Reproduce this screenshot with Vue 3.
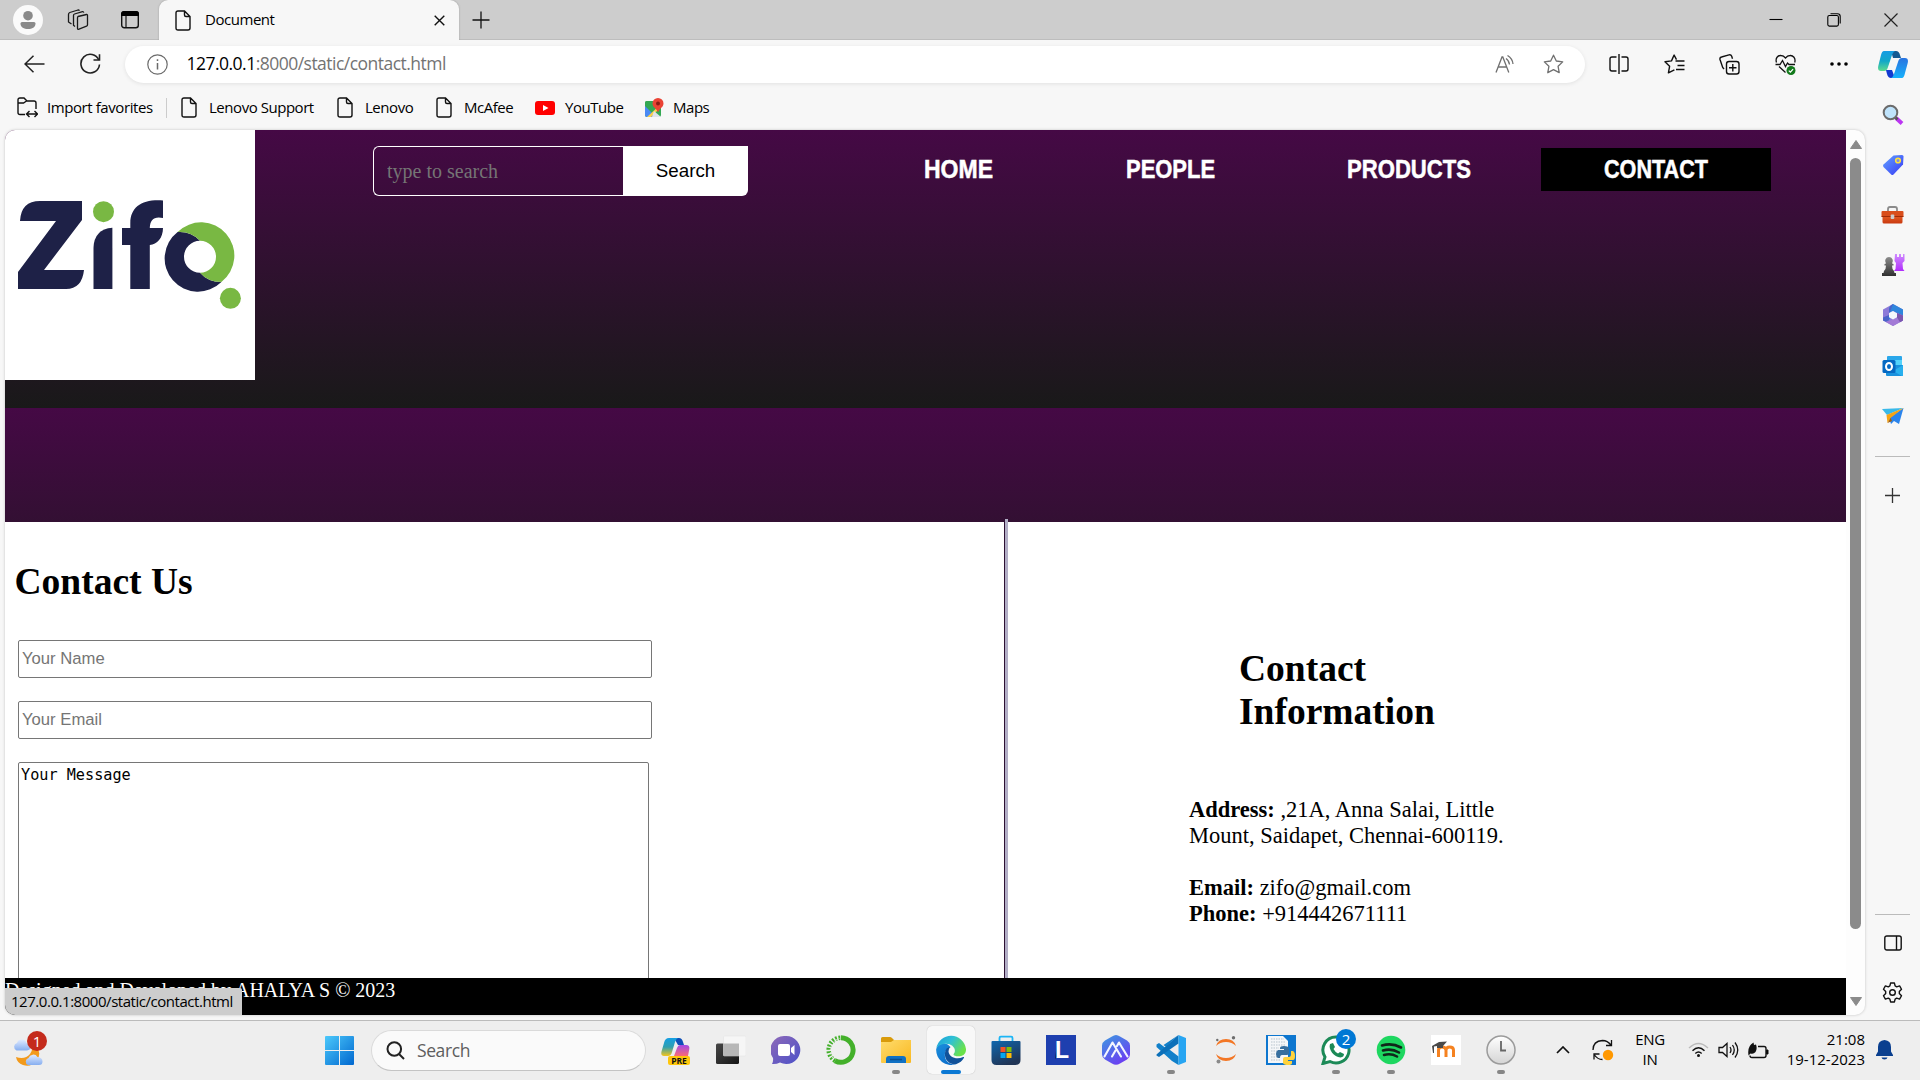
<script setup>
const navItems = [
  { label: 'HOME', width: 69, natural: 75 },
  { label: 'PEOPLE', width: 89, natural: 101.4 },
  { label: 'PRODUCTS', width: 124, natural: 140.3 },
  { label: 'CONTACT', width: 104, natural: 120.4, active: true }
]
const fileMarks = [
  { label: 'Lenovo Support', width: 156 },
  { label: 'Lenovo', width: 99 },
  { label: 'McAfee', width: 99 }
]
</script>

<template>
  <div class="desktop">
    <svg class="defs" width="0" height="0">
      <defs>
        <linearGradient id="gBlue" x1="0" y1="0" x2="1" y2="1"><stop offset="0" stop-color="#4cc9fb" /><stop offset="1" stop-color="#0067cf" /></linearGradient>
        <linearGradient id="gCopA" x1="0" y1="0" x2="0" y2="1"><stop offset="0" stop-color="#159ce4" /><stop offset=".5" stop-color="#12a7c9" /><stop offset="1" stop-color="#5fdc8e" /></linearGradient>
        <linearGradient id="gCopB" x1="0" y1="0" x2="0" y2="1"><stop offset="0" stop-color="#2a74e0" /><stop offset="1" stop-color="#17b1fb" /></linearGradient>
        <linearGradient id="gPreA" x1="0" y1="0" x2="0" y2="1"><stop offset="0" stop-color="#149fe3" /><stop offset=".5" stop-color="#2f9fb0" /><stop offset="1" stop-color="#f4c51b" /></linearGradient>
        <linearGradient id="gPreB" x1="0" y1="0" x2="0" y2="1"><stop offset="0" stop-color="#a14ae6" /><stop offset="1" stop-color="#fb6a74" /></linearGradient>
        <linearGradient id="gTag" x1="0" y1="0" x2="1" y2="1"><stop offset="0" stop-color="#62a4ff" /><stop offset="1" stop-color="#3737f5" /></linearGradient>
        <linearGradient id="gBox" x1="0" y1="0" x2="0" y2="1"><stop offset="0" stop-color="#ee6a2c" /><stop offset="1" stop-color="#c93a10" /></linearGradient>
        <linearGradient id="gRook" x1="0" y1="0" x2="0" y2="1"><stop offset="0" stop-color="#cf8cff" /><stop offset="1" stop-color="#b02dfb" /></linearGradient>
        <linearGradient id="gPawn" x1="0" y1="0" x2="0" y2="1"><stop offset="0" stop-color="#8c8c8c" /><stop offset="1" stop-color="#303030" /></linearGradient>
        <linearGradient id="gChat" x1="0" y1="0" x2="1" y2="1"><stop offset="0" stop-color="#8f6ab8" /><stop offset="1" stop-color="#4b50c8" /></linearGradient>
        <linearGradient id="gFold" x1="0" y1="0" x2="1" y2="1"><stop offset="0" stop-color="#ffdc6d" /><stop offset="1" stop-color="#f9b820" /></linearGradient>
        <linearGradient id="gEdgeA" x1="0" y1="0" x2="1" y2=".5"><stop offset="0" stop-color="#1b9fd9" /><stop offset=".5" stop-color="#2fc0d5" /><stop offset="1" stop-color="#6be24a" /></linearGradient>
        <linearGradient id="gEdgeB" x1="0" y1="0" x2=".6" y2="1"><stop offset="0" stop-color="#1b8fdd" /><stop offset="1" stop-color="#0d6fcb" /></linearGradient>
        <linearGradient id="gStore" x1="0" y1="0" x2=".5" y2="1"><stop offset="0" stop-color="#0f67ae" /><stop offset="1" stop-color="#203556" /></linearGradient>
        <linearGradient id="gHex" x1="0" y1="0" x2=".6" y2="1"><stop offset="0" stop-color="#3c9ae0" /><stop offset="1" stop-color="#6b3ff2" /></linearGradient>
        <linearGradient id="gDark" x1="0" y1="0" x2="1" y2="1"><stop offset="0" stop-color="#474747" /><stop offset="1" stop-color="#151515" /></linearGradient>
        <linearGradient id="gCloud" x1="0" y1="0" x2="0" y2="1"><stop offset="0" stop-color="#dfeaff" /><stop offset="1" stop-color="#86aef0" /></linearGradient>
        <linearGradient id="gClock" x1="0" y1="0" x2="0" y2="1"><stop offset="0" stop-color="#ffffff" /><stop offset="1" stop-color="#d4d4d4" /></linearGradient>
      </defs>
    </svg>

    <header class="tabbar">
      <svg class="profile" width="30" height="30" viewBox="0 0 30 30"><circle cx="15" cy="15" r="15" fill="#fafafa" /><circle cx="15" cy="10.700" r="4.800" fill="#8a8a8a" /><path d="M7.500 18.500q0-1.500 1.500-1.500h12q1.500 0 1.500 1.500c0 4-3.500 5.500-7.500 5.500s-7.500-1.500-7.500-5.500z" fill="#8a8a8a" /></svg>
      <svg class="workspaces" width="22" height="22" viewBox="0 0 22 22" fill="none" stroke="#1a1a1a" stroke-width="1.300" stroke-linejoin="round"><path d="M11 7.500l8.500-2q1-.2 1 .9v9.300q0 1-1 1.500l-7.500 3q-1.500.4-1.500-1V9q0-1.200.5-1.500z" /><path d="M8 17.500l-1.500-1.200V6.500q0-1.200 1-1.500l8-2.300q1-.2 1.300 1" /><path d="M4.500 15L1.500 13V5.500Q1.500 4 2.800 3.500L11 1q1-.2 1.400.8" /></svg>
      <svg class="tabaction" width="20" height="20" viewBox="0 0 20 20"><rect x="1.700" y="1.700" width="16.600" height="16" rx="2.500" fill="none" stroke="#111" stroke-width="1.400" /><path d="M1 6V4q0-3 3-3h12q3 0 3 3v2z" fill="#000" /><path d="M6 6v12" stroke="#111" stroke-width="1.200" /></svg>
      <div class="tab">
        <svg class="file" width="16" height="21" viewBox="0 0 16 21"><path d="M3 1h6.500L15 6.500V18q0 2-2 2H3q-2 0-2-2V3q0-2 2-2zM9.500 1v4q0 1.500 1.500 1.500h4" fill="none" stroke="#111" stroke-width="1.400" /></svg>
        <span class="ui tabtitle">Document</span>
        <svg width="11" height="11" viewBox="0 0 11 11"><path d="M.7.7l9.600 9.600M10.300.7L.7 10.300" stroke="#111" stroke-width="1.400" /></svg>
      </div>
      <svg class="newtab" width="18" height="18" viewBox="0 0 18 18"><path d="M9 .5v17M.5 9h17" stroke="#111" stroke-width="1.300" /></svg>
      <div class="winctl">
        <svg width="14" height="14" viewBox="0 0 14 14"><path d="M.5 6.500h13" stroke="#000" stroke-width="1.100" /></svg>
        <svg width="14" height="14" viewBox="0 0 14 14" fill="none" stroke="#000" stroke-width="1.100"><rect x=".8" y="2.500" width="10.600" height="10.600" rx="1.500" /><path d="M3.500.8h7q2.700 0 2.700 2.700v7" /></svg>
        <svg width="14" height="14" viewBox="0 0 14 14"><path d="M.5.5l13 13M13.500.5l-13 13" stroke="#222" stroke-width="1.200" /></svg>
      </div>
    </header>

    <div class="toolbar">
      <svg class="back" width="21" height="18" viewBox="0 0 21 18" fill="none" stroke="#222" stroke-width="1.500"><path d="M20.500 9H1M9.500.7L1 9l8.500 8.300" /></svg>
      <svg class="reload" width="22" height="22" viewBox="0 0 22 22" fill="none" stroke="#222" stroke-width="1.600"><path d="M19.800 7A9.300 9.300 0 1 0 20.500 11.500" /><path d="M20.500 1.200V7H14.500" /></svg>
      <div class="omnibox">
        <svg width="21" height="21" viewBox="0 0 21 21" fill="none" stroke="#6a6a6a" stroke-width="1.200"><circle cx="10.500" cy="10.500" r="9.700" /><path d="M10.500 9v6.500M10.500 5.300v1.600" stroke-width="1.500" /></svg>
        <span class="ui url"><b>127.0.0.1</b>:8000/static/contact.html</span>
        <svg class="aloud" width="20" height="19" viewBox="0 0 20 19" fill="none" stroke="#707070" stroke-width="1.300"><path d="M1 17.500L7 2h.800l6 15.500M3.200 12h8.500M11 3.500q3 2 3.500 6M12.500.5q5 3 5.500 8.500" /></svg>
        <svg class="star" width="21" height="20" viewBox="0 0 21 20"><path d="M10.500 1.200l2.800 5.800 6.400.9-4.600 4.400 1.100 6.400-5.700-3-5.700 3 1.100-6.400L1.300 7.900 7.700 7z" fill="none" stroke="#707070" stroke-width="1.300" stroke-linejoin="round" /></svg>
      </div>
      <div class="tools">
        <svg width="20" height="20" viewBox="0 0 20 20" fill="none" stroke="#111" stroke-width="1.400"><path d="M10 0v20M7.500 3H3Q1 3 1 5v10q0 2 2 2h4.500M12.500 3H17q2 0 2 2v10q0 2-2 2h-4.500" /></svg>
        <svg width="21" height="20" viewBox="0 0 21 20" fill="none" stroke="#111" stroke-width="1.400" stroke-linejoin="round"><path d="M12.500 5.600L10.100 1 7.500 6.900l-6.500.9 4.600 4.500-1.200 6.500 6-3M11.500 7h9M13.500 11.500h7M12 15.500h8.500" /></svg>
        <svg width="21" height="21" viewBox="0 0 21 21" fill="none" stroke="#111" stroke-width="1.400"><rect x="7.500" y="7.500" width="12.500" height="12.500" rx="2.500" /><path d="M13.800 10v7.500M10 13.800h7.500M5 15L3.700 13.500 1 5.500Q.5 3.500 2.500 3L10 .9q2-.4 2.700 1.300l.8 2.500" /></svg>
        <svg width="21" height="21" viewBox="0 0 21 21" fill="none" stroke="#111" stroke-width="1.300"><path d="M1.500 8.500C0 4 3 1.300 6 1.500q2.500.1 4.500 2.500 2-2.400 4.500-2.500c3-.2 6 2.500 4.700 7M.5 10.500H5l2.500-4 3 6 2-3.500 1.500 1.500h6M4 12.500l6.500 6" /><circle cx="16" cy="16.500" r="4.500" fill="#127a1b" stroke="none" /><path d="M13.800 16.600l1.600 1.500 2.700-3" stroke="#fff" /></svg>
        <svg width="18" height="6" viewBox="0 0 18 6"><circle cx="2" cy="3" r="1.800" /><circle cx="9" cy="3" r="1.800" /><circle cx="16" cy="3" r="1.800" /></svg>
      </div>
      <svg class="copilot" width="30" height="27" viewBox="0 0 30 27"><path d="M13 0h5q3 0 4 4l1 3h-8z" fill="#145a92" /><path d="M6 0h11q-2 1-3 4l-4 12q-1 4-4 4H3Q-1 20 .4 14.500L3 4Q4 0 6 0z" fill="url(#gCopA)" /><path d="M8 19h6l3 8h-4q-3 0-4-4z" fill="#123ad0" /><path d="M24 27H13q2-1 3-4l4-12q1-4 4-4h3q4 0 2.600 5.500L27 22q-1 5-3 5z" fill="url(#gCopB)" /></svg>
    </div>

    <div class="below">
      <div class="leftcol">
        <div class="bookmarks">
          <svg class="import" width="21" height="21" viewBox="0 0 21 21" fill="none" stroke="#111" stroke-width="1.400"><path d="M8 17.500H3q-2 0-2-2V3q0-2 2-2h4l3 3h7q2 0 2 2v6M1 6h5.500L9.500 4M10 17h10M12.500 14L9.500 17l3 3M17.500 14l3 3-3 3" /></svg>
          <span class="ui importlabel">Import favorites</span>
          <i class="sep"></i>
          <div v-for="m in fileMarks" :key="m.label" class="mark" :style="{ width: m.width + 'px' }">
            <svg width="16" height="21" viewBox="0 0 16 21"><path d="M3 1h6.500L15 6.500V18q0 2-2 2H3q-2 0-2-2V3q0-2 2-2zM9.500 1v4q0 1.500 1.500 1.500h4" fill="none" stroke="#111" stroke-width="1.400" /></svg>
            <span class="ui">{{ m.label }}</span>
          </div>
          <div class="mark yt">
            <svg width="20" height="14" viewBox="0 0 20 14"><rect width="20" height="14" rx="3" fill="#f00" /><path d="M8 4l5.500 3L8 10z" fill="#fff" /></svg>
            <span class="ui">YouTube</span>
          </div>
          <div class="mark maps">
            <svg width="20" height="20" viewBox="0 0 20 20"><rect x="1" y="3" width="16" height="16" rx="2" fill="#34a853" /><path d="M1 8l11 11H3q-2 0-2-2z" fill="#4a8af4" /><path d="M3 19L17 6v3L7 19z" fill="#fbd04b" /><path d="M10 13l7 6h-9z" fill="#dfe3ea" /><path d="M1 5q0-2 2-2h6v6l-3 3-5-5z" fill="#34a853" /><path d="M14 0a5.500 5.500 0 0 1 5.500 5.500c0 4-4 4.500-5.500 9-1.500-4.500-5.500-5-5.500-9A5.500 5.500 0 0 1 14 0z" fill="#ea4335" /><circle cx="14" cy="5.500" r="2" fill="#8c1b13" /></svg>
            <span class="ui">Maps</span>
          </div>
        </div>

        <div class="viewport">
          <div class="page">
            <div class="hero">
              <svg class="logo" width="250" height="250" viewBox="0 0 250 250">
                <rect width="250" height="250" fill="#fff" />
                <g fill="#1e2147">
                  <path d="M15 91Q16 71 35 71H77V90L39 140H79Q77 159 61 159H13V142L51 91Z" />
                  <path d="M88.500 159V118Q89 99 107.400 97.700V159Z" />
                  <path d="M125.300 159V115H117V98H125.300V93C125.500 77 137 69 158 70.500V88C149 86 145 90 144.800 98H158C158 108 152 114.500 144.800 115V159Z" />
                  <path d="M172.600 102A33.300 33.300 0 1 0 216.400 152Q203 152 195 142.700A16 16 0 0 1 195 110.700Q186 101 172.600 102Z" />
                </g>
                <g fill="#79b843">
                  <circle cx="98.500" cy="81.700" r="10.500" />
                  <path d="M172.600 102A33.300 33.300 0 1 1 216.400 152Q203 152 195 142.700A16 16 0 0 0 195 110.700Q186 101 172.600 102Z" />
                  <circle cx="225.400" cy="168.300" r="10.500" />
                </g>
              </svg>
              <div class="search">
                <input type="text" placeholder="type to search" />
                <button>Search</button>
              </div>
              <nav>
                <a v-for="n in navItems" :key="n.label" :class="{ active: n.active }">
                  <span :style="{ width: n.width + 'px' }"><em :style="{ transform: `scaleX(${n.width / n.natural})` }">{{ n.label }}</em></span>
                </a>
              </nav>
            </div>
            <div class="band"></div>
            <div class="contact">
              <section class="form">
                <h1>Contact Us</h1>
                <input type="text" placeholder="Your Name" />
                <input type="text" placeholder="Your Email" />
                <textarea>Your Message</textarea>
              </section>
              <i class="divider"></i>
              <section class="info">
                <h1>Contact<br />Information</h1>
                <p><b>Address:</b> ,21A, Anna Salai, Little<br />Mount, Saidapet, Chennai-600119.<br /><br /><b>Email:</b> zifo@gmail.com<br /><b>Phone:</b> +914442671111</p>
              </section>
            </div>
            <footer>Designed and Developed by AHALYA S © 2023</footer>
            <div class="ui status">127.0.0.1:8000/static/contact.html</div>
          </div>
          <div class="scroll">
            <svg width="12" height="9" viewBox="0 0 12 9"><path d="M6 .5L11.500 8.500H.5z" fill="#8b8b8b" stroke="#8b8b8b" stroke-linejoin="round" /></svg>
            <i></i>
            <svg class="down" width="12" height="9" viewBox="0 0 12 9"><path d="M6 8.500L.5.500h11z" fill="#8b8b8b" stroke="#8b8b8b" stroke-linejoin="round" /></svg>
          </div>
        </div>
      </div>

      <aside class="sidebar">
        <div class="slot"><svg width="22" height="22" viewBox="0 0 22 22"><path d="M14 14l6 5.500" stroke="#bb35f2" stroke-width="4" /><path d="M12.500 12.500l3 3" stroke="#555" stroke-width="2.500" /><circle cx="8.500" cy="8.500" r="6.800" fill="#bfe3fb" stroke="#6b6b6b" stroke-width="2" /></svg></div>
        <div class="slot"><svg width="22" height="22" viewBox="0 0 22 22"><path d="M11.500 1.500L20 1q1.500 0 1.500 1.500L21 10.500 11.500 20.500q-1.200 1-2.300 0L1.500 13q-1-1.500 0-2.500z" fill="url(#gTag)" /><circle cx="16" cy="6.500" r="2.300" fill="#7d8de8" stroke="#ffe13b" stroke-width="1.600" /></svg></div>
        <div class="slot"><svg width="23" height="18" viewBox="0 0 23 18"><path d="M7 6V3q0-2 2-2h5q2 0 2 2v3" fill="none" stroke="#8b8b8b" stroke-width="1.800" /><rect x="1.500" y="7" width="20" height="10.500" rx="1.500" fill="url(#gBox)" /><rect x=".5" y="5" width="22" height="6" rx="1" fill="#d94e1c" /><path d="M.5 10.500h22" stroke="#a02c09" /><rect x="9.700" y="8.500" width="3.600" height="4.500" rx="1" fill="#ccc" /></svg></div>
        <div class="slot"><svg width="24" height="24" viewBox="0 0 24 24"><path d="M14 1h2v3h2V1h2v3h2V1h1.500v7l-2 2 .5 6 1.500 2H13l1.500-2L15 10l-1.500-2z" fill="url(#gRook)" /><path d="M8 4a4 4 0 0 1 3 6.500l1.500.5v1.500H11q0 4 2 5.500l.5 2H15v3H1v-3h1.500l.5-2q2-1.500 2-5.500H3.500V11L5 10.500A4 4 0 0 1 8 4z" fill="url(#gPawn)" /></svg></div>
        <div class="slot"><svg width="22" height="24" viewBox="0 0 22 24"><path d="M11 1l10 5.500v11L11 23 1 17.500v-11z" fill="#8c7ad8" /><path d="M11 1l10 5.500v6L15 10l-4-2-3 1.500V16l-4 2.500L7 17V7q0-4 4-6z" fill="#2f86dc" /><path d="M11 1Q7 3 7 7v10l-3 1.800L1 17.500v-3L7 12z" fill="#4a63c8" /><path d="M15 10l6 2.500v5L11 23l-7-4 7-2.500 4-2.300z" fill="#a37ad6" /><path d="M15 10l6 2.500v5l-3 1.700-3-5z" fill="#7b57b0" /><path d="M11 8l4 2.200v4L11 16.500l-4-2.200V10z" fill="#f5f8fc" /></svg></div>
        <div class="slot"><svg width="22" height="22" viewBox="0 0 22 22"><rect x="5" y="1" width="15" height="12" rx="1" fill="#2aa7ea" /><rect x="12" y="5" width="8" height="6" fill="#52d3fb" /><path d="M4 10h17v10q0 1-1 1H5q-1 0-1-1z" fill="#1a91dd" /><path d="M21 10L11 16l9 5h1z" fill="#28b0ee" /><rect x=".5" y="5" width="13" height="13" rx="1.500" fill="#0569c3" /><ellipse cx="7" cy="11.500" rx="3" ry="3.500" fill="none" stroke="#fff" stroke-width="2" /></svg></div>
        <div class="slot"><svg width="22" height="18" viewBox="0 0 22 18"><path d="M21.500 1L17 17l-5-3-3 3-2-6z" fill="#2b84ec" /><path d="M21.500 1L0 2l5 6z" fill="#39b9e9" /><path d="M21.500 1L4.500 8l1 8 3-5z" fill="#f6a414" /><path d="M5.500 16l3-5 1.500 3z" fill="#a15e0a" /></svg></div>
        <i class="line"></i>
        <svg class="add" width="15" height="15" viewBox="0 0 15 15"><path d="M7.500 0v15M0 7.500h15" stroke="#333" stroke-width="1.300" /></svg>
        <i class="line low"></i>
        <svg class="panel" width="18" height="16" viewBox="0 0 18 16" fill="none" stroke="#111" stroke-width="1.400"><rect x=".8" y="1" width="16.400" height="14" rx="2" /><path d="M12.500 1v14" /></svg>
        <svg class="gear" width="21" height="21" viewBox="0 0 24 24" fill="none" stroke="#111" stroke-width="1.600" stroke-linejoin="round"><path d="M9.800 1.200h4.400l.8 3.300 1.800 1 3.300-1 2.200 3.800-2.500 2.500v2.400l2.500 2.500-2.200 3.800-3.300-1-1.800 1-.8 3.300H9.800L9 19.500l-1.800-1-3.300 1-2.200-3.800 2.500-2.500v-2.400L1.700 8.300l2.200-3.800 3.300 1 1.800-1z" /><circle cx="12" cy="12" r="3.200" /></svg>
      </aside>
    </div>

    <div class="taskbar">
      <div class="weather">
        <svg width="32" height="33" viewBox="0 0 32 33"><path d="M23 11q6 8 1 15-6 8-14 5-6-2-7-8 9 3 14-3 3-4 2-9z" fill="#f29a1c" /><path d="M3.500 16.500a4 4 0 0 1 .5-7.500 5 5 0 0 1 9.500 0q4 1 4 4t-3.500 3.500z" fill="url(#gCloud)" /><path d="M15 31a3.700 3.700 0 0 1 .5-7 5 5 0 0 1 9-1q5 .5 5 4.500 0 3.500-3.500 3.500z" fill="url(#gCloud)" /></svg>
        <span class="badge">1</span>
      </div>
      <svg class="start" width="29" height="29" viewBox="0 0 29 29" fill="url(#gBlue)"><path d="M1 0h13v14H0V1q0-1 1-1zM15 0h13q1 0 1 1v13H15zM0 15h14v14H1q-1 0-1-1zM15 15h14v13q0 1-1 1H15z" /></svg>
      <div class="tasksearch">
        <svg width="19" height="19" viewBox="0 0 19 19" fill="none" stroke="#222" stroke-width="2"><circle cx="8.300" cy="8" r="6.800" /><path d="M13 13l5 5" /></svg>
        <span class="ui">Search</span>
      </div>
      <div class="apps">
        <div class="app"><svg width="30" height="30" viewBox="0 0 30 30"><path d="M13 3h5q3 0 4 4l1 3h-6z" fill="#0d4fb8" /><path d="M8 3h9q-2 1-3 4l-3 10q-1 4-4 4H3q-3.500 0-2.500-4.500L3 8q1-5 5-5z" fill="url(#gPreA)" /><path d="M19 10h6q4 0 3.300 4L27 21H13l3-8q1-3 3-3z" fill="url(#gPreB)" /><rect x="7" y="21" width="22" height="9" rx="2" fill="#ffc60a" /><text x="18" y="28.500" text-anchor="middle" font-size="8.500" font-weight="bold" font-family="Open Sans, sans-serif" fill="#111">PRE</text></svg></div>
        <div class="app"><svg width="30" height="30" viewBox="0 0 30 30"><rect x="0" y="8.500" width="23" height="20.500" rx="1.500" fill="url(#gDark)" /><rect x="7.500" y="1" width="22.500" height="20" rx="1" fill="#f6f6f6" stroke="#e0e0e0" stroke-width=".5" /><rect x="7.500" y="8.500" width="15.500" height="12.500" fill="#b7b7b7" /></svg></div>
        <div class="app"><svg width="30" height="30" viewBox="0 0 30 30"><path d="M15 1a14 14 0 1 1-6 26.500Q5 29.500 1 29q1.500-3 1-6A14 14 0 0 1 15 1z" fill="url(#gChat)" /><rect x="7" y="9" width="12" height="12" rx="2" fill="#fff" /><path d="M20 13l3.500-3v10L20 17z" fill="#fff" /></svg></div>
        <div class="app"><svg width="30" height="30" viewBox="0 0 30 30" fill="none" stroke="#43b02a"><path d="M15 2.800a12.200 12.200 0 1 1-6 22.900" stroke-width="5" /><path d="M9 25.700A12.200 12.200 0 0 1 15 2.800" stroke-width="4.500" stroke-dasharray="1.800 1.500" /><path d="M7 23A12.200 12.200 0 0 1 14 3.500" stroke="#eee" stroke-width="1" stroke-dasharray="2 2" /></svg></div>
        <div class="app run"><svg width="30" height="30" viewBox="0 0 30 30"><path d="M0 3.500Q0 2 1.500 2H9q1 0 2 1l2 2h15q2 0 2 2v3H0z" fill="#d99b0b" /><path d="M0 7h10l3-2h17v22q0 1-1 1H1q-1 0-1-1z" fill="url(#gFold)" /><path d="M5 28v-4q0-3 3-3h14q3 0 3 3v4z" fill="#1071c4" /><path d="M9 24.500h12" stroke="#0c4f8e" stroke-width="1.500" /></svg></div>
        <div class="app active"><svg width="30" height="30" viewBox="0 0 30 30"><path d="M.2 14A15 15 0 0 0 20 29.200C12 30 8 24 9 18.500 9.500 15 12 13 14.500 12 10 6 2 8 .2 14z" fill="url(#gEdgeB)" /><path d="M9 18C8 25 14 30 20 29.200q5.500-2 8-6.500.3-1-.8-.6c-7 3-14 0-14.700-5.600Q12.500 13 14.500 12 9.500 12 9 18z" fill="#11529a" /><path d="M.3 13.500A15 15 0 0 1 30 14c.3 6-5 8-9.500 7.200-3-.5-3.500-1.500-2.500-2.700C21 14 16 8.500 9.500 8.800 5 9 1.500 11 .3 13.500z" fill="url(#gEdgeA)" /></svg></div>
        <div class="app"><svg width="30" height="30" viewBox="0 0 30 30"><path d="M8.500 7V3q0-1.300 1.300-1.300h10.400q1.300 0 1.300 1.300v4" fill="none" stroke="#1cb5f5" stroke-width="1.800" /><path d="M.5 7Q.5 6 1.500 6h27q1 0 1 1v18q0 5-5 5H5.500q-5 0-5-5z" fill="url(#gStore)" /><path d="M9.500 12h5v5h-5z" fill="#f35325" /><path d="M15.500 12h5v5h-5z" fill="#81bc06" /><path d="M9.500 18h5v5h-5z" fill="#05a6f0" /><path d="M15.500 18h5v5h-5z" fill="#ffba08" /></svg></div>
        <div class="app"><svg width="30" height="30" viewBox="0 0 30 30"><rect width="30" height="30" fill="#1e3faf" /><path d="M9 24l2-2V8z" fill="#0c2145" /><text x="9" y="22.500" font-size="23" font-weight="bold" font-family="Liberation Sans, sans-serif" fill="#fff">L</text></svg></div>
        <div class="app"><svg width="30" height="30" viewBox="0 0 30 30"><path d="M15 0q2 0 4 1.500l7 4q3 2 3 5v9q0 3-3 5l-7 4q-4 2.500-8 0l-7-4q-3-2-3-5v-9q0-3 3-5l7-4Q13 0 15 0z" fill="url(#gHex)" /><path d="M3.500 21.500L11.500 7.500l8.500 14M11 21.500l3.500-6M16 11l2-3.500 8.500 14" fill="none" stroke="#f4f6ff" stroke-width="2.100" stroke-linejoin="round" stroke-linecap="round" /></svg></div>
        <div class="app run"><svg width="30" height="30" viewBox="0 0 30 30"><path d="M22.500 0L9 12.500 3 8 .5 9.500v2.500L16 26l6.500 4v-8.500L7.500 10z" fill="#1180ca" /><path d="M.5 19.500L22.500 0v8.500L3 22 .5 20.500z" fill="#0c70b9" /><path d="M22.500 0L30 3v24l-7.500 3z" fill="#27a5f2" /></svg></div>
        <div class="app"><svg width="30" height="30" viewBox="0 0 30 30"><path d="M5 11q2-7 10-7t10 7q-4-4-10-4T5 11zM5 19q2 7 10 7t10-7q-4 4-10 4T5 19z" fill="#f37726" /><circle cx="22.500" cy="2.800" r="1.700" fill="#6d6d6d" /><circle cx="6.300" cy="5" r="1.200" fill="#6d6d6d" /><circle cx="7.500" cy="26.500" r="2" fill="#8a8a8a" /></svg></div>
        <div class="app"><svg width="30" height="30" viewBox="0 0 30 30"><rect width="30" height="30" fill="#0d76cf" /><path d="M2 1h15l5 5v22H2z" fill="#f4f6f8" /><path d="M5 4h13M5 7h15M5 10h15M5 13h8M5 16h6M5 19h6M5 22h8M5 25h9" stroke="#b7c3cc" stroke-dasharray="1.500 1" /><path d="M14 13q0-2 4-2t5 2v5q0 2-2 2h-5q-2 0-2 3h-2q-2-1-2-4t2-4h6v-1h-4z" fill="#376f9f" /><path d="M25 16h2q2 1 2 5t-2 4h-5v1h4v2q0 2-4 2t-5-2v-4q0-2 2-2h4q2 0 2-3z" fill="#ffd23c" /></svg></div>
        <div class="app run"><svg width="30" height="30" viewBox="0 0 30 30"><path d="M15.500 2A13 13 0 1 1 9 26.500L2 28.500 4 22A13 13 0 0 1 15.500 2z" fill="#fff" stroke="#1c8a57" stroke-width="3" /><path d="M9 9l3-1 2 4-1.500 2q2 3.500 4.500 4.500l2-1.500 4 2q0 3-3.500 3.500C13 22 7 14.500 9 9z" fill="#1c8a57" /></svg><span class="count">2</span></div>
        <div class="app run"><svg width="30" height="30" viewBox="0 0 30 30"><circle cx="15" cy="15" r="14.300" fill="#1ed760" /><path d="M6 10.500q10-3 19 2M7 15.500q8.500-2.500 16 2M8 20q7-2 13 1.500" fill="none" stroke="#10271a" stroke-width="2.600" stroke-linecap="round" /></svg></div>
        <div class="app"><svg width="30" height="30" viewBox="0 0 30 30"><rect width="30" height="30" fill="#fff" /><path d="M7.500 22v-7q0-3 3.500-3t4 3v7M15 15q0-3 3.700-3t3.800 3v7" fill="none" stroke="#f58220" stroke-width="3" /><path d="M1 11l7-4 8-.5-4 4.500v2H6v-2l-3 .5V18H2z" fill="#494949" /></svg></div>
        <div class="app run"><svg width="30" height="30" viewBox="0 0 30 30"><circle cx="15" cy="15" r="14" fill="url(#gClock)" stroke="#9b9b9b" stroke-width="1.500" /><path d="M15 6v9.500h5" fill="none" stroke="#666" stroke-width="1.800" /></svg></div>
      </div>
      <svg class="chev" width="14" height="8" viewBox="0 0 14 8"><path d="M1 7l6-6 6 6" fill="none" stroke="#111" stroke-width="1.700" /></svg>
      <svg class="sync" width="22" height="22" viewBox="0 0 22 22" fill="none" stroke="#111" stroke-width="1.300"><path d="M1 11q0-9 9.500-9.500 5 0 8.500 4.500M19.500 1v5.500H14M2 20.500V15h5.500M2.500 16q3 4.500 8 4.500" /><circle cx="16" cy="16" r="5.200" fill="#ff9800" stroke="none" /></svg>
      <div class="ui lang">ENG<br />IN</div>
      <svg class="wifi" width="21" height="16" viewBox="0 0 21 16" fill="none" stroke="#111" stroke-width="1.400"><path d="M1 6q9.500-9 19 0" stroke="#bbb" /><path d="M4.500 8.700q6-6 12 0M7.300 11.500q3.200-3 6.400 0" /><circle cx="10.500" cy="13.500" r="1.500" fill="#111" stroke="none" /></svg>
      <svg class="vol" width="21" height="18" viewBox="0 0 21 18" fill="none" stroke="#111" stroke-width="1.300"><path d="M1 6.500h3.500l4.500-4v13l-4.500-4H1zM12 6q2 3 0 6M14.500 4q3.500 5 0 10M17 1.500q5.500 7.500 0 15" /></svg>
      <svg class="batt" width="21" height="17" viewBox="0 0 21 17"><path d="M10 4.500h6q2 0 2 2v7q0 2-2 2H4q-2 0-2-2" fill="none" stroke="#111" stroke-width="1.400" /><path d="M18.500 8H20v4h-1.500z" stroke="#111" /><path d="M.5 13.500Q-1 4 5.500.5L6 3l2-.5q1.500 4.500-.5 7.500-2 2.500-5 1.500z" fill="#111" /></svg>
      <div class="ui clock">21:08<br />19-12-2023</div>
      <svg class="bell" width="17" height="20" viewBox="0 0 17 20"><path d="M8.500 0q6.500.5 6.500 7v4.500l2 3.500v1H0v-1l2-3.500V7Q2 .500 8.500 0zM5.500 17.500h6q-.5 2-3 2t-3-2z" fill="#0a3f8f" /></svg>
    </div>
  </div>
</template>

<style>
html, body { margin: 0; overflow: hidden; }
</style>

<style scoped>
.desktop { width: 1920px; height: 1080px; display: flex; flex-direction: column; overflow: hidden; background: #f7f7f7; font-family: "Liberation Serif", serif; color: #000; }
.defs { position: absolute; }
svg { display: block; flex: none; }
i, em { font-style: normal; }
.ui { font-family: "Open Sans", "Noto Sans", sans-serif; font-size: 15px; letter-spacing: -0.46px; white-space: nowrap; }

.tabbar { height: 40px; background: #cdcdcd; display: flex; align-items: center; box-shadow: inset 0 -1px #bdbdbd; flex: none; }
.profile { margin-left: 13px; }
.workspaces { margin-left: 24px; }
.tabaction { margin-left: 31px; }
.tab { margin-left: 19px; width: 300px; height: 40px; background: #f7f7f7; border-radius: 9px 9px 0 0; display: flex; align-items: center; box-sizing: border-box; padding: 0 14.500px 0 16px; box-shadow: 0 0 2px #999; clip-path: inset(0 -3px 0 -3px); }
.tabtitle { margin: 0 auto 0 14px; padding-bottom: 2px; }
.newtab { margin-left: 13px; margin-bottom: 1px; }
.winctl { margin-left: auto; display: flex; gap: 43.500px; padding-right: 22px; }

.toolbar { height: 48px; flex: none; display: flex; align-items: center; }
.back { margin-left: 24px; }
.reload { margin-left: 34px; }
.omnibox { margin-left: 24px; width: 1460px; height: 37px; border-radius: 19px; background: #fff; box-shadow: 0 1px 4px rgba(0, 0, 0, .09); display: flex; align-items: center; box-sizing: border-box; padding: 0 21px 0 22px; }
.url { margin-left: 18.500px; padding-bottom: 2px; font-size: 17.500px; letter-spacing: -0.52px; color: #737373; }
.url b { font-weight: 400; color: #000; }
.aloud { margin-left: auto; }
.star { margin-left: 28.500px; }
.tools { margin-left: 24px; display: flex; align-items: center; gap: 34.500px; }
.copilot { margin-left: auto; margin-right: 12px; }

.below { flex: 1; display: flex; min-height: 0; }
.leftcol { width: 1865px; display: flex; flex-direction: column; }
.bookmarks { height: 42px; display: flex; align-items: center; box-sizing: border-box; padding-bottom: 3px; }
.bookmarks .ui { padding-bottom: 2px; }
.import { margin-left: 17px; }
.importlabel { margin-left: 9px; width: 119px; letter-spacing: -0.42px; }
.sep { width: 1px; height: 20px; background: #ccc; margin-right: 14px; }
.mark { display: flex; align-items: center; gap: 12px; }
.yt { gap: 10px; width: 109px; }
.maps { gap: 9px; }

.viewport { display: flex; height: 885px; margin-left: 5px; border-radius: 10px; overflow: hidden; background: #fdfdfd; box-shadow: 0 0 3px rgba(0, 0, 0, .22); }
.page { width: 1841px; position: relative; background: #fff; display: flex; flex-direction: column; }
.hero { height: 278px; background: linear-gradient(#450945, #191919); display: flex; align-items: flex-start; flex: none; }
.search { margin: 16px 0 0 118px; width: 375px; height: 50px; display: flex; }
.search input { width: 250px; box-sizing: border-box; border: 1px solid #fff; border-right: 0; border-radius: 6px 0 0 6px; background: transparent; padding: 0 0 0 13px; font: 20px "Liberation Serif", serif; outline: none; }
.search input::placeholder { color: #757575; }
.search button { width: 125px; border: 0; border-radius: 0 0 6px 0; background: #fff; font: 18.750px "Liberation Sans", sans-serif; padding: 0 0 1px; }
nav { margin: 18px 0 0 113px; display: flex; gap: 6.600px; }
nav a { padding: 0 63px; height: 43px; color: #fff; font: bold 25px/43px "Liberation Sans", sans-serif; -webkit-text-stroke: .5px #fff; }
nav a.active { background: #000; }
nav span { display: block; }
nav em { display: block; width: max-content; transform-origin: 0 50%; }
.band { height: 114px; flex: none; background: linear-gradient(#450945, #191919) 0 0 / 100% 278px; }
.contact { height: 456px; flex: none; display: flex; }
.form { width: 999px; height: 456px; overflow: hidden; box-sizing: border-box; padding: 38px 0 0 9.500px; display: flex; flex-direction: column; }
h1 { margin: 0; font-size: 37.500px; line-height: 43px; }
.form input, .form textarea { margin: 0 0 23px 3.500px; box-sizing: border-box; width: 634px; height: 38px; flex: none; border: 1px solid #767676; border-radius: 2px; padding: 0 3px 1px; font: 16.667px "Liberation Sans", sans-serif; }
.form input::placeholder { color: #757575; }
.form h1 + input { margin-top: 37px; }
.form textarea { width: 631px; height: 260px; resize: none; padding: 3px 2px; font: 15.200px/19px "DejaVu Sans Mono", monospace; overflow: hidden; }
.divider { width: 1px; height: 459px; margin-top: -3px; background: #2d1033; border-right: 3px solid #b2aec6; z-index: 1; }
.info { padding: 125px 0 0 181px; }
.info h1 { margin-left: 50px; line-height: 43.400px; }
.info p { margin: 63px 0 0; font-size: 22.500px; line-height: 26px; white-space: nowrap; }
footer { height: 37px; background: #000; color: #fff; font-size: 20px; line-height: 24px; }
.status { position: absolute; left: 0; bottom: 0; width: 237px; height: 27px; box-sizing: border-box; padding-left: 6px; background: #cdcdcd; line-height: 26px; border-radius: 0 2px 0 8px; }
.scroll { width: 19px; display: flex; flex-direction: column; align-items: center; padding-top: 10px; box-sizing: border-box; }
.scroll i { width: 11px; height: 771px; border-radius: 6px; background: #8b8b8b; margin-top: 9px; }
.scroll .down { margin-top: 68px; }

.sidebar { width: 55px; display: flex; flex-direction: column; align-items: center; padding-top: 2px; }
.slot { height: 50.100px; width: 54px; display: flex; align-items: center; justify-content: center; }
.line { width: 35px; height: 1px; background: #bbb; margin-top: 15px; }
.add { margin-top: 31px; }
.line.low { margin-top: 411px; }
.panel { margin-top: 20px; }
.gear { margin-top: 31px; }

.taskbar { height: 60px; flex: none; background: #eee; border-top: 1px solid #bbb; box-sizing: border-box; display: flex; align-items: center; padding-bottom: 1px; }
.weather { width: 32px; margin-left: 13px; position: relative; }
.badge, .count { position: absolute; width: 20px; height: 20px; border-radius: 50%; color: #fff; font: 15px/20px "Open Sans", sans-serif; text-align: center; }
.badge { left: 14px; top: -3px; background: #c42b1c; }
.start { margin-left: 280px; }
.tasksearch { margin-left: 17px; width: 275px; height: 41px; border-radius: 21px; background: #fafafa; border: 1px solid #dadada; border-bottom-color: #c4c4c4; box-sizing: border-box; display: flex; align-items: center; padding-left: 14px; }
.tasksearch span { margin-left: 12px; font-size: 17.500px; color: #5e5e5e; letter-spacing: -0.4px; }
.apps { margin-left: 2px; display: flex; }
.app { width: 55px; height: 58px; display: flex; align-items: center; justify-content: center; position: relative; }
.app.active::before { content: ""; position: absolute; left: 3.500px; top: 5px; width: 48px; height: 48px; border-radius: 5px; background: #f8f8f8; box-shadow: 0 0 1px #aaa; }
.app svg { position: relative; }
.app.run::after, .app.active::after { content: ""; position: absolute; bottom: 5px; left: 23.500px; width: 8px; height: 4px; border-radius: 2px; background: #868686; }
.app.active::after { width: 20px; left: 17.500px; background: #0a78d4; }
.count { left: 28px; top: 8px; background: #0078d4; }
.chev { margin-left: 28px; }
.sync { margin-left: 22px; }
.lang { width: 40px; margin-left: 16px; text-align: center; font-size: 15px; line-height: 20px; letter-spacing: -0.3px; padding-bottom: 2px; }
.wifi { margin-left: 18px; }
.vol { margin-left: 9px; }
.batt { margin-left: 9px; }
.clock { margin-left: auto; text-align: right; line-height: 20px; letter-spacing: 0; padding-bottom: 3px; }
.bell { margin: 0 27px 0 11px; }
</style>
